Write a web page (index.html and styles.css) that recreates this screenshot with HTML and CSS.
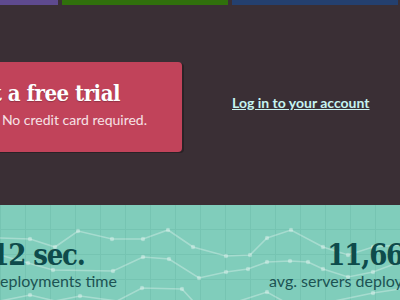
FILE: index.html
```html
<!DOCTYPE html>
<html lang="en">
<head>
  <meta charset="UTF-8">
  <title>Deploy faster</title>
  <link rel="stylesheet" href="styles.css">
</head>
<body>

  <div class="top">
    <div class="bars">
      <span class="bar bar-purple"></span>
      <span class="bar bar-green"></span>
      <span class="bar bar-blue"></span>
    </div>

    <div class="hero">
      <div class="trial-card">
        <h2>Start a free trial</h2>
        <p>No credit card required.</p>
      </div>
      <a class="login" href="#">Log in to your account</a>
    </div>
  </div>

  <div class="stats">
    <svg class="chart" width="400" height="95" viewBox="0 0 400 95">
      <g class="chart-line">
        <polyline points="0,33 30,34 55,42 78,26 112,34 143,34 168,25 193,42 226,51 250,50 267,33 291,25 323,42 348,50 373,42 400,40"/>
        <polyline points="0,50 28,58 53,65 113,66 143,52 169,54 199,73 226,67 248,64 267,57 290,56 308,57 323,64 348,72 373,67 400,57"/>
        <polyline points="0,96 30,90 55,96 80,91 117,96 142,83 182,84 193,96 230,99 267,87 283,96 320,99 373,88 400,84"/>
      </g>
      <g class="chart-dot">
        <circle cx="30" cy="34" r="2.2"/><circle cx="55" cy="42" r="2.2"/><circle cx="78" cy="26" r="2.2"/>
        <circle cx="112" cy="34" r="2.2"/><circle cx="143" cy="34" r="2.2"/><circle cx="168" cy="25" r="2.2"/>
        <circle cx="193" cy="42" r="2.2"/><circle cx="226" cy="51" r="2.2"/><circle cx="250" cy="50" r="2.2"/>
        <circle cx="267" cy="33" r="2.2"/><circle cx="291" cy="25" r="2.2"/><circle cx="323" cy="42" r="2.2"/>
        <circle cx="348" cy="50" r="2.2"/><circle cx="373" cy="42" r="2.2"/>
        <circle cx="28" cy="58" r="2.2"/><circle cx="53" cy="65" r="2.2"/><circle cx="113" cy="66" r="2.2"/>
        <circle cx="143" cy="52" r="2.2"/><circle cx="169" cy="54" r="2.2"/><circle cx="199" cy="73" r="2.2"/>
        <circle cx="226" cy="67" r="2.2"/><circle cx="248" cy="64" r="2.2"/><circle cx="267" cy="57" r="2.2"/>
        <circle cx="290" cy="56" r="2.2"/><circle cx="308" cy="57" r="2.2"/><circle cx="323" cy="64" r="2.2"/>
        <circle cx="348" cy="72" r="2.2"/><circle cx="373" cy="67" r="2.2"/>
        <circle cx="30" cy="90" r="2.2"/><circle cx="80" cy="91" r="2.2"/><circle cx="142" cy="83" r="2.2"/>
        <circle cx="182" cy="84" r="2.2"/><circle cx="267" cy="87" r="2.2"/><circle cx="373" cy="88" r="2.2"/>
      </g>
    </svg>

    <div class="stat stat-left">
      <strong>12 sec.</strong>
      <span>avg. deployments time</span>
    </div>
    <div class="stat stat-right">
      <strong>11,660</strong>
      <span>avg. servers deployed</span>
    </div>
  </div>

</body>
</html>
```

FILE: styles.css
```css
body { margin: 0; overflow: hidden; font-family: Lato, "Liberation Sans", sans-serif; }

.top { background: #3a2f35; height: 205px; overflow: hidden; }
.bars { display: flex; gap: 4px; margin-left: -108px; }
.bar { width: 166px; height: 5px; flex: none; }
.bar-purple { background: #5e4a8f; }
.bar-green { background: #30700c; }
.bar-blue { background: #24406f; }

.hero { display: flex; align-items: center; margin-top: 57px; }
.trial-card {
  flex: none;
  width: 242px;
  height: 90px;
  margin-left: -60px;
  background: #c1435a;
  border-radius: 4px;
  box-shadow: 2px 1px 0 #2a2226;
  color: #fff;
  text-align: right;
}
.trial-card h2 {
  margin: 17px 62px 0 0;
  font-family: "DejaVu Serif", "Liberation Serif", serif;
  font-stretch: condensed;
  font-size: 22px;
  letter-spacing: -0.5px;
  line-height: 28px;
  white-space: nowrap;
  text-shadow: 0 1px 1px rgba(0, 0, 0, 0.25);
}
.trial-card p {
  margin: 4px 35px 0 0;
  font-size: 14px;
  line-height: 18px;
  color: #f6e2e6;
  white-space: nowrap;
}
.login {
  margin: -10px 0 0 50px;
  color: #c6f4f1;
  font-size: 14px;
  font-weight: bold;
  white-space: nowrap;
}

.stats {
  position: relative;
  display: flex;
  justify-content: space-between;
  height: 95px;
  margin: 0 -20px 0 -62px;
  background-color: #80cdbb;
  background-image:
    linear-gradient(to bottom, transparent 24px, #76c4b2 24px),
    linear-gradient(to right, #76c4b2 1px, transparent 1px);
  background-size: 25px 25px;
  background-position: 12px 0;
}
.chart { position: absolute; top: 0; left: 62px; }
.chart-line polyline { fill: none; stroke: rgba(255, 255, 255, 0.3); stroke-width: 1.6; }
.chart-dot circle { fill: rgba(255, 255, 255, 0.34); }

.stat { position: relative; display: flex; flex-direction: column; padding-top: 34px; color: #1c5353; }
.stat-left { width: 200px; align-items: center; }
.stat-right { align-items: flex-end; }
.stat strong {
  font-family: "DejaVu Serif", "Liberation Serif", serif;
  font-stretch: condensed;
  font-size: 29px;
  letter-spacing: -1.2px;
  line-height: 32px;
  color: #0e4b4b;
}
.stat span { font-size: 16px; line-height: 20px; white-space: nowrap; }
```
